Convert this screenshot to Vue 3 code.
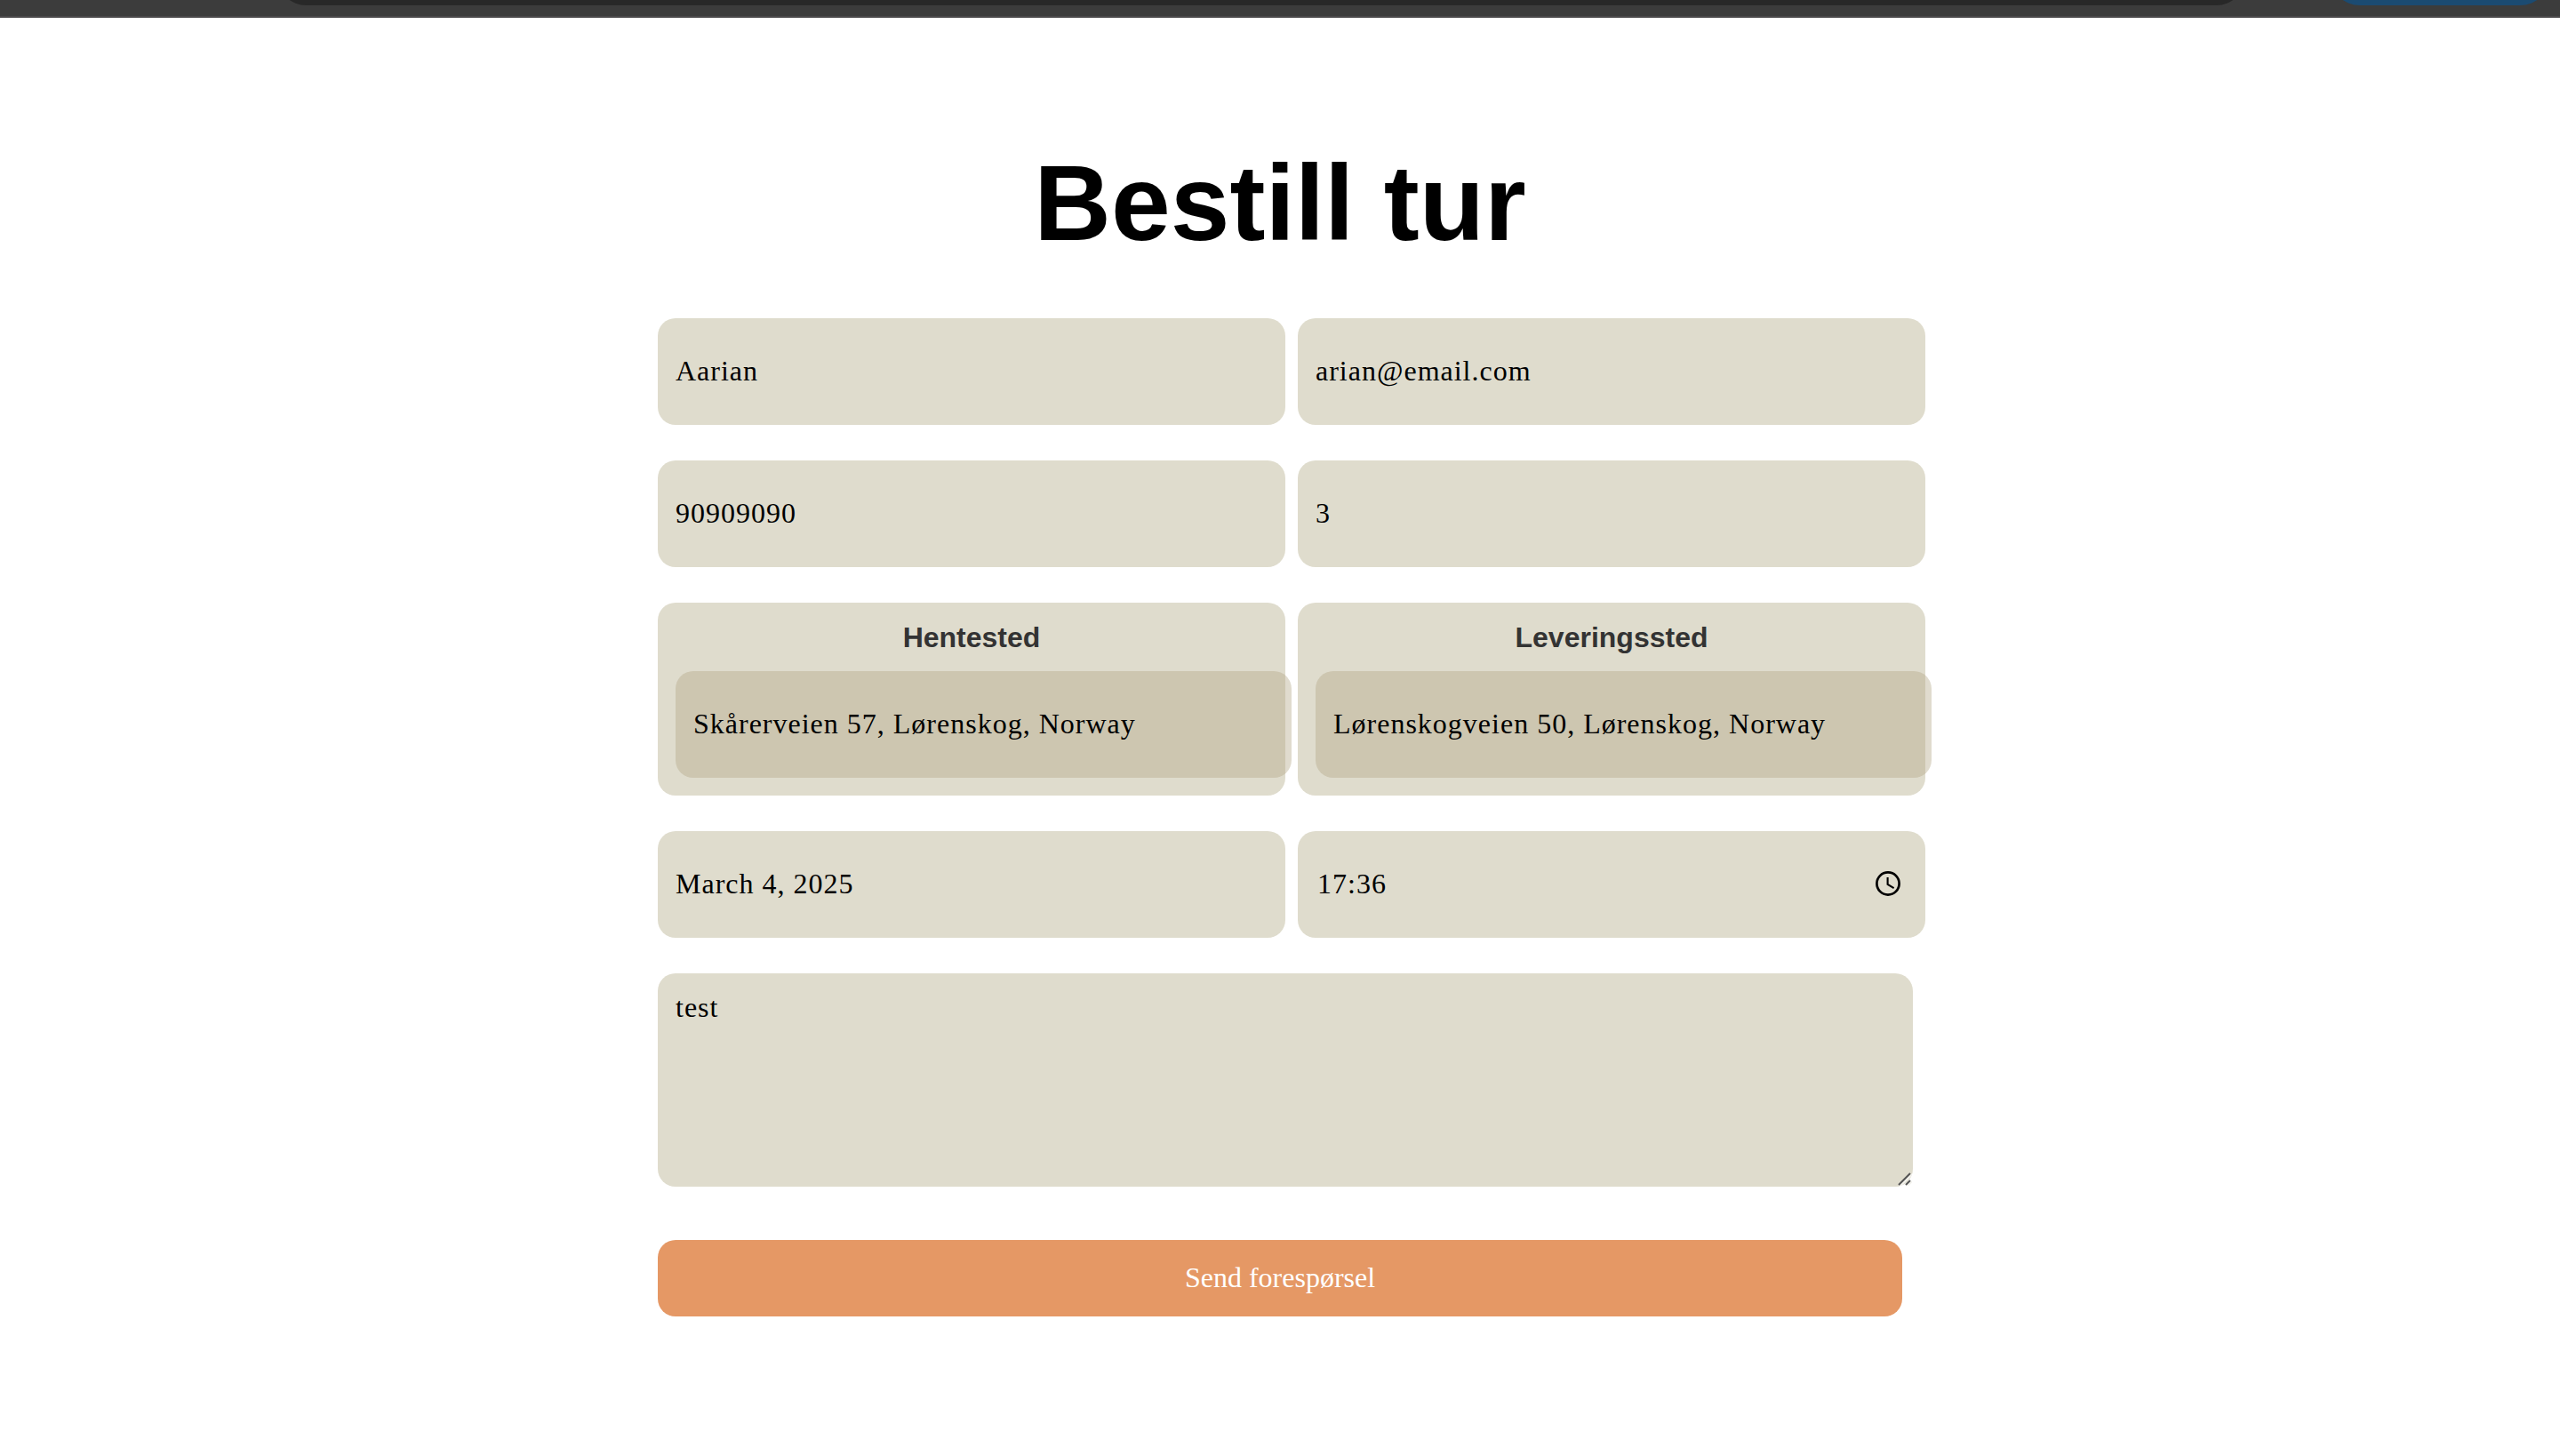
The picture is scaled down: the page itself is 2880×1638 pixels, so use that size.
<script setup>
import { reactive } from 'vue'

const form = reactive({
  name: 'Aarian',
  email: 'arian@email.com',
  phone: '90909090',
  passengers: '3',
  pickup: 'Skårerveien 57, Lørenskog, Norway',
  dropoff: 'Lørenskogveien 50, Lørenskog, Norway',
  date: 'March 4, 2025',
  time: '17:36',
  message: 'test',
})
</script>

<template>
  <header class="chrome">
    <div class="address"></div>
    <div class="action"></div>
  </header>

  <main class="page">
    <h1>Bestill tur</h1>

    <form class="booking" @submit.prevent>
      <div class="row">
        <input v-model="form.name" class="field" type="text" aria-label="Navn" />
        <input v-model="form.email" class="field" type="email" aria-label="E-post" />
      </div>

      <div class="row">
        <input v-model="form.phone" class="field" type="tel" aria-label="Telefon" />
        <input v-model="form.passengers" class="field" type="text" inputmode="numeric" aria-label="Antall" />
      </div>

      <div class="row">
        <div class="place">
          <label for="pickup">Hentested</label>
          <input id="pickup" v-model="form.pickup" type="text" />
        </div>
        <div class="place">
          <label for="dropoff">Leveringssted</label>
          <input id="dropoff" v-model="form.dropoff" type="text" />
        </div>
      </div>

      <div class="row">
        <input v-model="form.date" class="field" type="text" aria-label="Dato" />
        <div class="field time">
          <input v-model="form.time" type="text" aria-label="Klokkeslett" />
          <button class="clock" type="button" aria-label="Velg klokkeslett">
            <svg viewBox="0 0 28 28" width="28" height="28" fill="none" stroke="#000">
              <circle cx="14" cy="14" r="12.6" stroke-width="2.7" />
              <path d="M13.6 7v8l7 4.2" stroke-width="2.1" />
            </svg>
          </button>
        </div>
      </div>

      <div class="message">
        <textarea v-model="form.message" aria-label="Melding"></textarea>
        <svg class="grip" viewBox="0 0 16 16" width="16" height="16" fill="none">
          <path d="M3 16L16 3M11 16l5-5" stroke="#f4f3ee" stroke-width="2" />
          <path d="M1 15L14 2M9 15l5-5" stroke="#555" stroke-width="2" />
        </svg>
      </div>

      <button class="submit" type="submit">Send forespørsel</button>
    </form>
  </main>
</template>

<style>
body {
  margin: 0;
  background: #fff;
}
</style>

<style scoped>
.chrome {
  display: flex;
  align-items: flex-end;
  gap: 94px;
  box-sizing: border-box;
  height: 20px;
  padding: 0 11px 12px 311px;
  overflow: hidden;
  background: #3c3c3c;
  border-bottom: 2px solid #4a484a;
}

.address,
.action {
  height: 68px;
  border-radius: 34px;
}

.address {
  flex: 1;
  background: #282828;
}

.action {
  width: 248px;
  background: #1b4b72;
}

.page {
  max-width: 1400px;
  margin: 0 auto;
  padding: 139px 0;
}

h1 {
  margin: 0 0 61px;
  font: bold 120px/138px "Liberation Sans", Arial, sans-serif;
  text-align: center;
  color: #000;
}

.booking {
  display: flex;
  flex-direction: column;
  gap: 40px;
}

.row {
  display: flex;
  gap: 14px;
}

input,
textarea {
  margin: 0;
  padding: 0;
  border: 0;
  outline: 0;
  background: none;
  font: 32px/37px "Liberation Serif", "Times New Roman", serif;
  letter-spacing: 1px;
  color: #000;
}

.field,
.place {
  flex: none;
  box-sizing: border-box;
  width: calc(49% + 20px);
  padding: 20px;
  border-radius: 20px;
  background: #dfdccd;
}

.field {
  height: 120px;
  padding: 18px 20px 20px;
}

.place label {
  display: block;
  margin-bottom: 18px;
  font: bold 32px/39px "Liberation Sans", Arial, sans-serif;
  text-align: center;
  color: #333;
}

.place input {
  display: block;
  width: 98%;
  height: 82px;
  padding: 18px 20px 20px;
  border-radius: 20px;
  background: rgba(178, 165, 132, 0.4);
}

.time {
  display: flex;
  align-items: center;
  justify-content: space-between;
  padding: 18px 28px 20px 22px;
}

.clock {
  display: flex;
  padding: 0;
  border: 0;
  background: none;
}

.message {
  position: relative;
  width: calc(98% + 40px);
}

textarea {
  display: block;
  box-sizing: border-box;
  width: 100%;
  height: 240px;
  padding: 20px;
  border-radius: 20px;
  resize: none;
  background: #dfdccd;
}

.grip {
  position: absolute;
  right: 1px;
  bottom: 1px;
}

.submit {
  width: 100%;
  height: 86px;
  margin: 20px 0 0;
  padding: 0 0 2px;
  border: 0;
  border-radius: 20px;
  background: #e59865;
  font: 32px/36px "Liberation Serif", "Times New Roman", serif;
  color: #fff;
}
</style>
